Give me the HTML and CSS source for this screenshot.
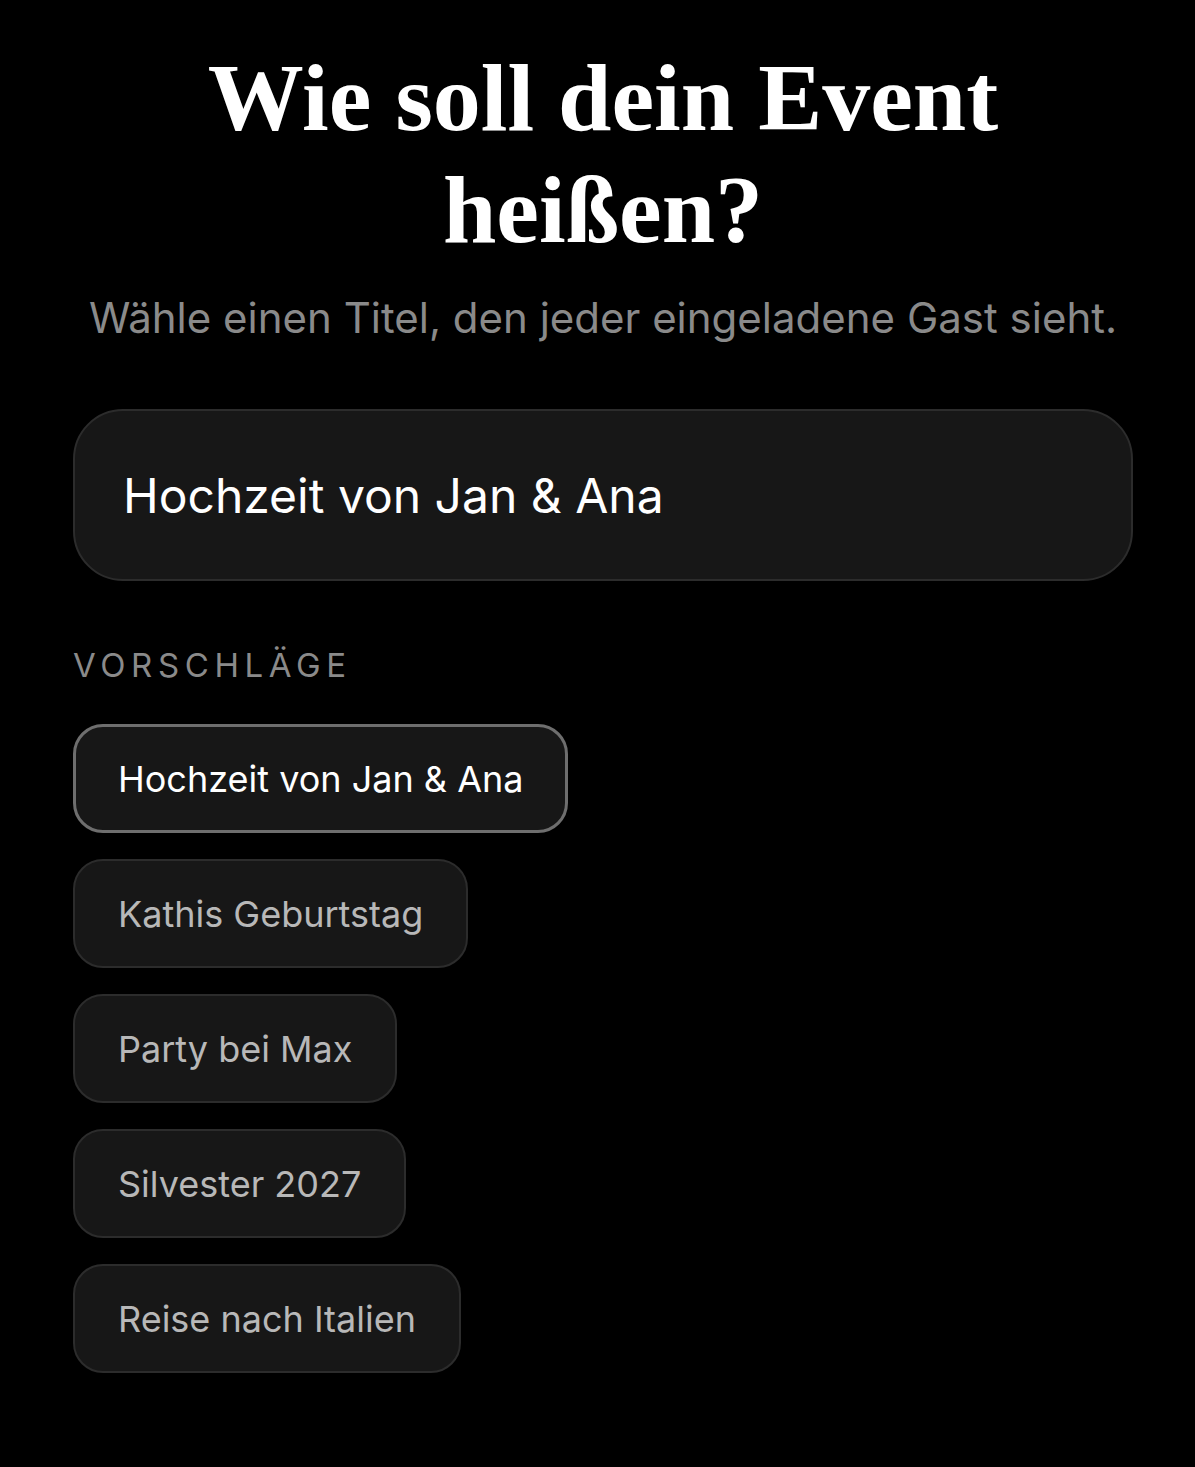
FILE: index.html
```html
<!DOCTYPE html>
<html lang="de">
<head>
    <meta charset="UTF-8">
    <title>Event benennen</title>
    <link rel="stylesheet" href="styles.css">
</head>
<body>

<div class="page">
    <h1 class="title">Wie soll dein Event heißen?</h1>
    <p class="subtitle">Wähle einen Titel, den jeder eingeladene Gast sieht.</p>

    <div class="nameField">
        <span class="nameValue">Hochzeit von Jan &amp; Ana</span>
    </div>

    <h3 class="label">Vorschläge</h3>
    <div class="chips">
        <span class="chip active">Hochzeit von Jan &amp; Ana</span>
        <span class="chip">Kathis Geburtstag</span>
        <span class="chip">Party bei Max</span>
        <span class="chip">Silvester 2027</span>
        <span class="chip">Reise nach Italien</span>
    </div>
</div>

</body>
</html>
```

FILE: styles.css
```css
* {
    padding: 0;
    margin: 0;
    box-sizing: border-box;
}
html, body {
    background: #000;
}
body {
    font-family: Inter, "Noto Sans", sans-serif;
    color: #fff;
}
.page {
    padding: 42px 62px 60px 73px;
    display: flex;
    flex-direction: column;
}
.title {
    font-family: "Liberation Serif", "Times New Roman", serif;
    font-weight: bold;
    font-size: 96px;
    line-height: 112px;
    text-align: center;
    padding: 0 120px;
}
.subtitle {
    margin-top: 26px;
    font-size: 42px;
    line-height: 52px;
    color: #8a8a8a;
    text-align: center;
    white-space: nowrap;
}
.nameField {
    margin-top: 65px;
    height: 172px;
    background: #171717;
    border: 2px solid #2c2c2c;
    border-radius: 50px;
    display: flex;
    align-items: center;
    padding: 0 48px;
}
.nameValue {
    font-size: 48px;
    color: #fff;
}
.label {
    margin-top: 64px;
    font-size: 33px;
    line-height: 40px;
    font-weight: normal;
    text-transform: uppercase;
    letter-spacing: 5.6px;
    color: #8a8a8a;
}
.chips {
    margin-top: 39px;
    display: flex;
    flex-direction: column;
    align-items: flex-start;
    gap: 26px;
}
.chip {
    display: inline-flex;
    align-items: center;
    height: 109px;
    padding: 0 43px;
    font-size: 36px;
    color: #b8b8b8;
    background: #171717;
    border: 2px solid #2c2c2c;
    border-radius: 30px;
}
.chip.active {
    color: #fff;
    border: 3px solid #6e6e6e;
    padding: 0 42px;
}
```
